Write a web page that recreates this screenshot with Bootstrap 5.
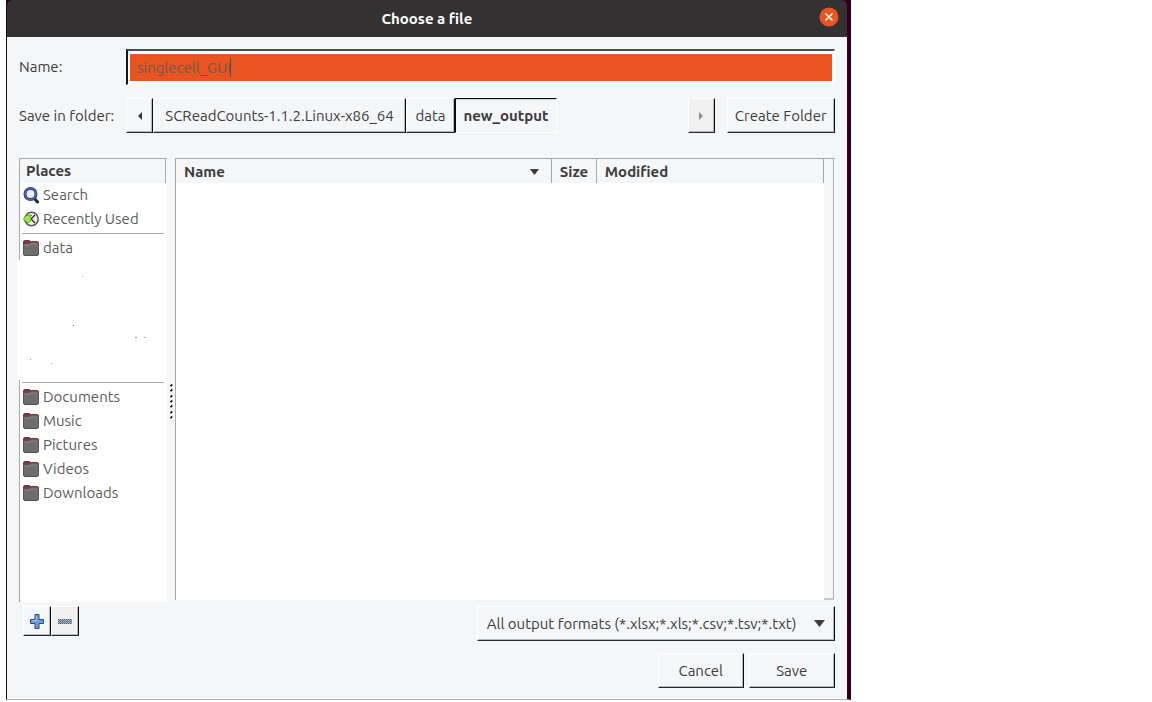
<!DOCTYPE html>
<html lang="en">
<head>
<meta charset="utf-8">
<meta name="viewport" content="width=device-width, initial-scale=1">
<title>Choose a file</title>
<link href="https://cdn.jsdelivr.net/npm/bootstrap@5.3.0/dist/css/bootstrap.min.css" rel="stylesheet">
<style>
  :root { --face: #f4f6f8; --ink: #3c3c3c; --line: #a5a8ad; }
  body { font-family: Ubuntu, "Noto Sans", sans-serif; font-size: 15px; line-height: 20px; color: var(--ink); background: #fff; }
  .desk { width: 73.85%; min-height: 100vh; padding: 0 0 2px 6px; }
  .dialog { background: var(--face); border-left: 1px solid #1c0618; border-right: 4px solid #2c001e; border-bottom: 1px solid #b0b2b5; }
  .titlebar { height: 37px; background: #333132; color: #fff; border-radius: 6px 6px 0 0; }
  .title-wrap { background: #2c001e; }
  .close-btn { right: 8px; top: 7px; width: 20px; height: 20px; }
  .dialog-body { padding: 12px 12px 11px; }
  .field-label { width: 107px; }
  .name-field { height: 36px; padding: 3px 2px; background: #fff; border: 1px solid; border-width: 2px 1px 1px 2px; border-color: #4c4e55 #fff #fff #15151a; }
  .name-field input { background: #e95420; color: #6b5d55; border: 0; border-radius: 0; padding: 0 7px; outline: 0; }
  .caret { left: 102px; top: 7px; width: 1px; height: 19px; background: #4f4f4f; }
  .path-row { margin: 13px 0 25px; }
  .bevel { height: 35px; padding: 0; background: var(--face); color: var(--ink); border: 1px solid; border-color: #fff #0c0c0c #26282b #fff; box-shadow: inset -1px -1px 0 #b5b8bc; border-radius: 0; white-space: nowrap; }
  .bevel:disabled { background: #f0f0f0; }
  .sunken { font-weight: 700; border-color: #0c0c0c #fff #fff #0c0c0c; box-shadow: inset 0 1px 0 #cfd2d5; }
  .w-arrow { width: 27px; } .w-long { width: 253px; } .w-short { width: 49px; } .w-current { width: 102px; }
  .w-create { width: 108px; margin-left: 12px; } .w-action { width: 86px; } .gap-actions { gap: 5px; }
  .panes { min-height: 483px; }
  .side { width: 148px; }
  .places { background: #fff; border-top: 1px solid var(--line); }
  .edge { border-left: 1px solid var(--line); }
  .head-cell { height: 24px; background: var(--face); font-weight: 700; padding: 2px 6px 0; border-right: 1px solid var(--line); margin-right: 1px; }
  .place { height: 24px; padding: 0 3px; gap: 4px; color: #5c5c5c; text-decoration: none; }
  .rule { height: 1px; margin: 2px 3px 2px 2px; background: var(--line); }
  .cleared { height: 120px; margin-left: -2px; }
  .pm { margin: 4px 0 5px 4px; }
  .pm .bevel { width: 28px; height: 30px; }
  .grip { width: 8px; padding-top: 4px; }
  .files { background: #fff; border: 1px solid var(--line); border-width: 1px 0 0 1px; }
  .files table { width: 100%; table-layout: fixed; }
  .files th { height: 24px; padding: 1px 8px 0; background: var(--face); border-right: 1px solid var(--line); }
  .c-size { width: 45px; } .c-mod { width: 227px; }
  .gutter { width: 10px; background: var(--face); border-right: 1px solid var(--line); border-bottom: 2px solid #c5c8cc; margin-right: 1px; }
  .filter { width: 358px; margin-top: 6px; }
  .filter select { appearance: none; padding: 0 24px 0 9px; }
  .filter svg { right: 10px; top: 14px; pointer-events: none; }
  .actions { margin-top: 12px; }
</style>
</head>
<body>
<svg class="d-none">
  <symbol id="folder" viewBox="0 0 16 16">
    <path d="M.5 7V2Q.5.5 2 .5h4.500l1 1H14q1.500 0 1.500 1.500v4z" fill="#8d2f45" stroke="#6d4048"/>
    <path d="M8 2h6q1 0 1 1v1H7z" fill="#d2502f"/>
    <path d="M.5 5.500Q.5 4 1.500 4H6l1-1h7.500q1 0 1 1v10q0 1.500-1.500 1.500H2Q.5 15.500.5 14z" fill="#6e6e6e" stroke="#575353"/>
    <path d="M1.500 5h5l1-1H14.500" stroke="#8b8b8b" fill="none"/>
  </symbol>
</svg>
<div class="desk d-flex">
<main class="dialog d-flex flex-column flex-fill">
  <div class="title-wrap">
    <header class="titlebar position-relative d-flex align-items-center justify-content-center fw-bold">
      <span>Choose a file</span>
      <button class="close-btn btn p-0 border-0 position-absolute d-flex" type="button" aria-label="Close">
        <svg width="20" height="20" viewBox="0 0 20 20"><circle cx="10" cy="10" r="9.500" fill="#e95420"/><path d="M6.500 6.500l7 7m0-7l-7 7" stroke="#fff" stroke-width="1.500"/></svg>
      </button>
    </header>
  </div>
  <form class="dialog-body d-flex flex-column flex-fill">
    <div class="d-flex align-items-center">
      <label class="field-label" for="fname">Name:</label>
      <div class="name-field position-relative d-flex flex-fill">
        <input class="w-100" id="fname" type="text" value="singlecell_GUI" spellcheck="false">
        <span class="caret position-absolute"></span>
      </div>
    </div>
    <div class="path-row d-flex align-items-center">
      <span class="field-label">Save in folder:</span>
      <button class="bevel w-arrow" type="button" aria-label="Back"><svg class="d-block mx-auto" width="4" height="8" viewBox="0 0 4 8"><path d="M4 0v8L0 4z" fill="#333"/></svg></button>
      <button class="bevel w-long" type="button">SCReadCounts-1.1.2.Linux-x86_64</button>
      <button class="bevel w-short" type="button">data</button>
      <button class="bevel sunken w-current" type="button">new_output</button>
      <button class="bevel w-arrow ms-auto" type="button" aria-label="Forward" disabled><svg class="d-block mx-auto" width="4" height="8" viewBox="0 0 4 8"><path d="M0 0v8L4 4z" fill="#8c8f90"/></svg></button>
      <button class="bevel w-create" type="button">Create Folder</button>
    </div>
    <div class="panes d-flex flex-fill">
      <section class="side d-flex flex-column flex-shrink-0">
        <nav class="places d-flex flex-column flex-fill" aria-label="Places">
          <div class="edge">
            <div class="head-cell">Places</div>
            <a class="place d-flex align-items-center" href="#"><svg width="16" height="17" viewBox="0 0 16 17"><path d="M11 11l3.500 4" stroke="#292b2d" stroke-width="3" stroke-linecap="round"/><circle cx="7.500" cy="7" r="5.500" fill="#edf2f7" stroke="#263878" stroke-width="3"/><circle cx="7.500" cy="7" r="5.500" fill="none" stroke="#4864b4" stroke-width="1.500"/></svg>Search</a>
            <a class="place d-flex align-items-center" href="#"><svg width="16" height="17" viewBox="0 0 16 17"><circle cx="8.500" cy="8" r="6.700" fill="#eeeeec" stroke="#555753" stroke-width="1.500"/><path d="M8 8l4-4M8 8l4 4" stroke="#222" stroke-width="1.200"/><path d="M.6 7.500L4.500 3v1.800Q7 3 9 4.500 6.500 5 7 7.500L8.500 9 5 12 .6 8.500z" fill="#9be84a" stroke="#4e9a06" stroke-width=".8"/></svg>Recently Used</a>
            <div class="rule"></div>
            <a class="place d-flex align-items-center" href="#"><svg width="16" height="16"><use href="#folder"/></svg>data</a>
          </div>
          <div class="cleared bg-white">
            <svg width="148" height="120" viewBox="0 0 148 120" aria-hidden="true"><g fill="#999"><rect x="65" y="16" width="1" height="1" fill="#d9a56c"/><rect x="56" y="65" width="1" height="1" fill="#555"/><rect x="118" y="77" width="2" height="1"/><rect x="127" y="77" width="2" height="1" fill="#bbb"/><rect x="13" y="99" width="1" height="1"/><rect x="34" y="103" width="1" height="1"/></g></svg>
          </div>
          <div class="edge flex-fill">
            <div class="rule"></div>
            <a class="place d-flex align-items-center" href="#"><svg width="16" height="16"><use href="#folder"/></svg>Documents</a>
            <a class="place d-flex align-items-center" href="#"><svg width="16" height="16"><use href="#folder"/></svg>Music</a>
            <a class="place d-flex align-items-center" href="#"><svg width="16" height="16"><use href="#folder"/></svg>Pictures</a>
            <a class="place d-flex align-items-center" href="#"><svg width="16" height="16"><use href="#folder"/></svg>Videos</a>
            <a class="place d-flex align-items-center" href="#"><svg width="16" height="16"><use href="#folder"/></svg>Downloads</a>
          </div>
        </nav>
        <div class="pm d-flex">
          <button class="bevel" type="button" aria-label="Add"><svg class="d-block mx-auto" width="14" height="15" viewBox="0 0 14 15"><path d="M5 .5h4V5.500h4.500v4H9v5H5v-5H.5v-4H5z" fill="#6c9ed0" stroke="#204a87"/><path d="M6.500 2v4.500H2" stroke="#a9c9e8" fill="none"/></svg></button>
          <button class="bevel" type="button" aria-label="Remove" disabled><svg class="d-block mx-auto" width="14" height="5" viewBox="0 0 14 5"><rect width="14" height="5" fill="#a9b6c6"/><path d="M0 .5h14M0 2.500h14M0 4.500h14" stroke="#4b6079" stroke-dasharray="1 1"/><path d="M1 1.500h13M1 3.500h13" stroke="#64788f" stroke-dasharray="1 1"/></svg></button>
        </div>
      </section>
      <div class="grip d-flex justify-content-center align-items-center flex-shrink-0">
        <svg width="4" height="36" viewBox="0 0 4 36"><path d="M3 0v2H1zM3 5v2H1zM3 11v2H1zM3 16v2H1zM3 21v2H1zM3 27v2H1zM3 32v2H1z" fill="#000" stroke="#000" stroke-width=".6"/></svg>
      </div>
      <section class="d-flex flex-column flex-fill">
        <div class="files d-flex flex-fill">
          <div class="flex-fill">
            <table>
              <colgroup><col><col class="c-size"><col class="c-mod"></colgroup>
              <thead><tr>
                <th scope="col"><span class="d-flex align-items-center justify-content-between">Name<svg class="me-1" width="9" height="6" viewBox="0 0 9 6"><path d="M0 0h9L4.500 6z" fill="#3c3c3c"/></svg></span></th>
                <th scope="col">Size</th>
                <th scope="col">Modified</th>
              </tr></thead>
            </table>
          </div>
          <div class="gutter flex-shrink-0"></div>
        </div>
        <div class="filter position-relative ms-auto">
          <select class="bevel w-100 d-block" aria-label="File format"><option>All output formats (*.xlsx;*.xls;*.csv;*.tsv;*.txt)</option></select>
          <svg class="position-absolute" width="11" height="7" viewBox="0 0 11 7"><path d="M0 0h11L5.500 7z" fill="#3c3c3c"/></svg>
        </div>
      </section>
    </div>
    <div class="actions d-flex justify-content-end gap-actions">
      <button class="bevel w-action" type="button">Cancel</button>
      <button class="bevel w-action" type="button">Save</button>
    </div>
  </form>
</main>
</div>
</body>
</html>
